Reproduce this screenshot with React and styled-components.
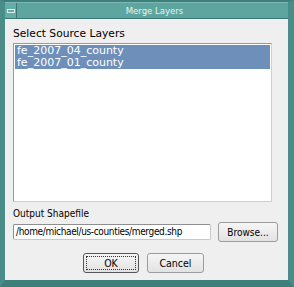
import React from 'react';
import styled, { createGlobalStyle } from 'styled-components';

const Global = createGlobalStyle`
  html, body {
    margin: 0;
    padding: 0;
    background: #4f918d;
  }
  body {
    font-family: "DejaVu Sans", "Liberation Sans", sans-serif;
    font-size: 11px;
    color: #000;
  }
`;

const Frame = styled.div`
  width: 294px;
  height: 287px;
  box-sizing: border-box;
  background: #56a09b;
  border-top: 2px solid #3f7f7b;
  border-left: 5px solid #4a8c88;
  border-right: 6px solid #4a8c88;
  border-bottom: 7px solid #3f7f7b;
  display: flex;
  flex-direction: column;
`;

const TitleBar = styled.div`
  height: 15px;
  display: flex;
  align-items: stretch;
  border-top: 1px solid #7dbab6;
  border-bottom: 1px solid #3a7774;
  background: #5ea5a0;
`;

const MenuButton = styled.div`
  width: 11px;
  border-right: 1px solid #3a7774;
  display: flex;
  align-items: center;
  justify-content: center;
  background: #66aca7;
  &::after {
    content: '';
    width: 6px;
    height: 2px;
    border: 1px solid #d8eeec;
  }
`;

const Title = styled.div`
  flex: 1;
  text-align: center;
  color: #e4f4f2;
  font-family: "DejaVu Sans Condensed", "DejaVu Sans", sans-serif;
  font-size: 9.5px;
  line-height: 15px;
  padding-left: 4px;
`;

const Panel = styled.div`
  flex: 1;
  background: #efefef;
  padding: 8px 8px 0 8px;
  display: flex;
  flex-direction: column;
`;

const Label = styled.div`
  line-height: 13px;
  margin-bottom: ${p => p.gap ?? 3}px;
  font-size: ${p => p.size || 11}px;
  font-family: ${p => (p.condensed ? '"DejaVu Sans Condensed", ' : '')}"DejaVu Sans", sans-serif;
`;

const List = styled.div`
  height: 159px;
  width: 259px;
  background: #fff;
  border: 1px solid #9a9a9a;
  border-right-color: #cfcfcf;
  border-bottom-color: #cfcfcf;
  box-sizing: border-box;
  padding: 1px;
  margin-bottom: 5px;
`;

const Item = styled.div`
  height: 12px;
  line-height: 12px;
  padding-left: 2px;
  background: ${p => (p.selected ? '#6d8fba' : 'transparent')};
  color: ${p => (p.selected ? '#fff' : '#000')};
`;

const FileRow = styled.div`
  display: flex;
  align-items: center;
  gap: 7px;
  margin-bottom: 11px;
`;

const Input = styled.div`
  width: 198px;
  height: 16px;
  box-sizing: border-box;
  background: #fff;
  border: 1px solid #8f8f8f;
  border-right-color: #c8c8c8;
  border-bottom-color: #c8c8c8;
  border-radius: 2px;
  padding-left: 2px;
  line-height: 14px;
  white-space: nowrap;
  overflow: hidden;
  font-family: "DejaVu Sans Condensed", "DejaVu Sans", sans-serif;
  font-size: 10px;
  letter-spacing: -0.35px;
`;

const Button = styled.div`
  width: ${p => p.w}px;
  height: 20px;
  box-sizing: border-box;
  border: 1px solid #9c9c9c;
  border-radius: 3px;
  background: linear-gradient(#f6f6f6, #e2e2e2);
  display: flex;
  align-items: center;
  justify-content: center;
  position: relative;
  font-family: "DejaVu Sans Condensed", "DejaVu Sans", sans-serif;
  font-size: ${p => p.size || 10}px;
  ${p =>
    p.focused &&
    `
    border-color: #555;
    &::after {
      content: '';
      position: absolute;
      inset: 2px;
      border: 1px dotted #333;
    }
  `}
`;

const ButtonRow = styled.div`
  display: flex;
  justify-content: center;
  gap: 8px;
  padding-right: 6px;
`;

export default function App() {
  return (
    <>
      <Global />
      <Frame>
        <TitleBar>
          <MenuButton />
          <Title>Merge Layers</Title>
        </TitleBar>
        <Panel>
          <Label size={10.7}>Select Source Layers</Label>
          <List>
            <Item selected>fe_2007_04_county</Item>
            <Item selected>fe_2007_01_county</Item>
          </List>
          <Label size={10} condensed gap={2}>Output Shapefile</Label>
          <FileRow>
            <Input>/home/michael/us-counties/merged.shp</Input>
            <Button w={60}>Browse...</Button>
          </FileRow>
          <ButtonRow>
            <Button w={56} size={10.5} focused>OK</Button>
            <Button w={57} size={10.5}>Cancel</Button>
          </ButtonRow>
        </Panel>
      </Frame>
    </>
  );
}
